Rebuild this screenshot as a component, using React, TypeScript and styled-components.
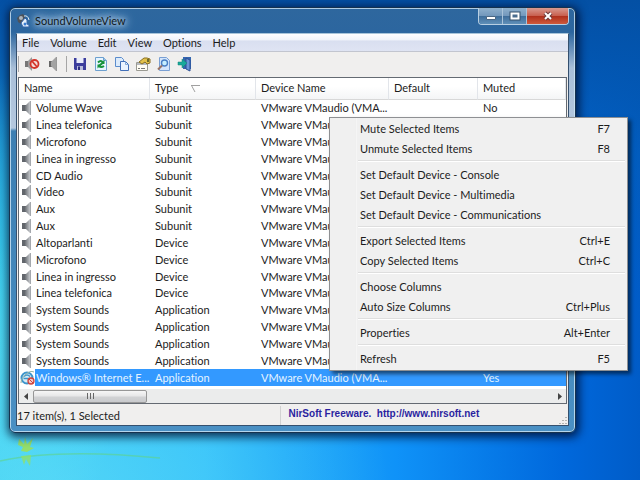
import React from "react";
import styled, { createGlobalStyle, css } from "styled-components";

const GlobalStyle = createGlobalStyle`
  * { box-sizing: border-box; }
  body { margin: 0; font-family: Lato, "Noto Sans", sans-serif; font-size: 11px; font-variant-ligatures: none; color: #1c1c1c; }
  button, kbd { font: inherit; font-variant-ligatures: none; color: inherit; border: 0; background: none; padding: 0; }
`;

const Desktop = styled.main`
  position: relative;
  min-height: 100vh;
  padding: 7px 64px 48px 9px;
  overflow: hidden;
  background:
    radial-gradient(ellipse 340px 260px at 8% 104%, rgba(130, 238, 255, 0.45), transparent),
    radial-gradient(ellipse 120px 260px at 0% 70%, rgba(70, 214, 240, 0.8), transparent),
    linear-gradient(180deg, #0450a4 0%, rgba(3, 84, 172, 0.9) 12%, rgba(4, 92, 180, 0.5) 32%, rgba(0, 100, 200, 0) 62%),
    linear-gradient(90deg, #2cc4ee 0%, #2cbcf8 32%, #0f92f8 62%, #0068dc 88%, #005cc8 100%);
`;

const Flower = styled.svg`
  position: absolute;
  left: 0;
  bottom: 0;
`;

const Window = styled.section`
  position: relative;
  padding: 0 6px 6px;
  border: 1px solid #16324e;
  border-radius: 6px;
  box-shadow: inset 0 0 0 1px rgba(206, 230, 246, 0.8), 1px 2px 10px 2px rgba(0, 10, 40, 0.8);
  background: linear-gradient(180deg, #2e679e 0, #2c669f 24px, #a9bfd8 60px, #b4c8df 120px, #3d7fb2 123px, #4a90c4 100%);
`;

const TitleBar = styled.header`
  display: flex;
  align-items: center;
  height: 25px;
  gap: 5px;
`;

const TitleText = styled.h1`
  margin: 0;
  flex: 1;
  font-size: 11px;
  line-height: 22px;
  font-weight: 400;
  color: #101820;
  text-shadow: 0 0 5px #c0d8ee, 0 0 8px #b8d4ec, 0 0 10px #b8d4ec, 0 0 14px #a8c8e4;
`;

const Controls = styled.div`
  display: flex;
  align-self: flex-start;
  height: 17px;
  border: 1px solid #b8cfe2;
  border-top: 0;
  border-radius: 0 0 4px 4px;
  overflow: hidden;
`;

const ControlButton = styled.button<{ $close?: boolean }>`
  display: grid;
  place-items: center;
  width: ${(p) => (p.$close ? 41 : 24)}px;
  border-right: ${(p) => (p.$close ? 0 : 1)}px solid #a9c3da;
  background: ${(p) =>
    p.$close
      ? "linear-gradient(180deg, #d99a90 0, #c8604f 48%, #b0301c 52%, #cf5a3c 100%)"
      : "linear-gradient(180deg, #8fb0cd 0, #7398bc 48%, #3f6e9b 52%, #5f8fb8 100%)"};
`;

const Client = styled.div`
  border: 1px solid #35506e;
  border-top-color: #a8c4da;
  background: #f0efee;
`;

const MenuBar = styled.nav`
  display: flex;
  gap: 11px;
  height: 18px;
  padding: 0 5px;
  background: linear-gradient(180deg, #fdfdff 0, #f0f3fa 36%, #d9dff0 40%, #dfe4f3 100%);
  border-bottom: 1px solid #c2c5cf;
  line-height: 17px;
`;

const ToolBar = styled.div`
  display: flex;
  align-items: center;
  gap: 5px;
  height: 25px;
  padding: 0 1px 2px;
`;

const ToolButton = styled.button`
  display: grid;
  width: 16px;
  height: 16px;
`;

const Divider = styled.span`
  width: 1px;
  height: 16px;
  background: #a6a6a6;
`;

const ListView = styled.div`
  margin: 0 1px;
  border: 1px solid #646a72;
  background: #fff;
`;

const Rows = styled.div`
  height: 311px;
`;

const Table = styled.table`
  width: 100%;
  height: 308px;
  table-layout: fixed;
  border-collapse: separate;
  border-spacing: 0;
`;

const HeadCell = styled.th<{ $width?: number }>`
  width: ${(p) => (p.$width ? p.$width + "px" : "auto")};
  height: 22px;
  padding: 0 5px 2px;
  text-align: left;
  font-weight: 400;
  line-height: 16px;
  white-space: nowrap;
  background: linear-gradient(180deg, #fff 40%, #f4f5f6 100%);
  border-bottom: 1px solid #d8d8d8;
  border-right: 1px solid #e2e5ea;
`;

const SortMark = styled.svg`
  margin-left: 13px;
  vertical-align: -1px;
`;

const Row = styled.tr<{ $selected?: boolean }>`
  ${(p) =>
    p.$selected &&
    css`
      color: #e4f4ff;
      td { background: #3399ff; }
      td:first-child { background: linear-gradient(90deg, transparent 16px, #3399ff 16px); }
    `}
`;

const Cell = styled.td`
  padding: 0 5px;
  line-height: 16px;
  white-space: nowrap;
`;

const NameCell = styled(Cell)`
  padding: 0 0 0 1px;
`;

const NameLine = styled.div`
  display: flex;
  align-items: center;
  gap: 2px;
`;

const IconSlot = styled.i`
  display: grid;
  place-items: center;
  width: 14px;
  height: 16px;
`;

const ScrollBar = styled.div`
  display: flex;
  align-items: center;
  height: 14px;
  background: #ebecec;
`;

const ArrowButton = styled.button`
  display: grid;
  place-items: center;
  width: 14px;
  height: 14px;
`;

const Track = styled.div`
  flex: 1;
`;

const Thumb = styled.div`
  display: grid;
  place-items: center;
  width: 22%;
  height: 13px;
  border: 1px solid #979797;
  border-radius: 2px;
  background: linear-gradient(180deg, #f6f6f6 0, #e6e6e7 48%, #d2d3d5 52%, #c9cacd 100%);
`;

const StatusBar = styled.footer`
  display: flex;
  height: 21px;
  padding-top: 2px;
  line-height: 20px;
`;

const StatusText = styled.div`
  width: 48%;
  border-right: 1px solid #d2d2d2;
`;

const HomeLink = styled.a`
  flex: 1;
  padding-left: 7px;
  font: bold 10px/16px "Liberation Sans", Arial, sans-serif;
  color: #2a1fa0;
  text-decoration: none;
  white-space: pre;
`;

const Grip = styled.svg`
  align-self: flex-end;
`;

const ContextMenu = styled.div`
  position: absolute;
  top: 117px;
  left: 329px;
  width: 299px;
  padding: 0 1px 2px;
  border: 1px solid #8e9093;
  background: linear-gradient(90deg, #f0f0f0 25px, #e4e4e4 25px, #fafafa 26px, #f0f0f0 27px);
  box-shadow: 3px 3px 4px rgba(0, 0, 0, 0.55);
`;

const ContextItem = styled.button`
  display: flex;
  justify-content: space-between;
  align-items: center;
  width: 100%;
  height: 20px;
  padding: 0 16px 0 29px;
  white-space: nowrap;
`;

const Separator = styled.hr`
  height: 2px;
  margin: 2px 1px 2px 27px;
  border: 0;
  border-top: 1px solid #dedede;
  background: #fff;
`;

const Speaker = () => (
  <svg width="10" height="14" viewBox="0 0 10 14">
    <defs>
      <linearGradient id="cone" x1="0" x2="1">
        <stop offset="0" stopColor="#6c7075" />
        <stop offset="1" stopColor="#c3c6ca" />
      </linearGradient>
    </defs>
    <path d="M0 4h4v6H0z" fill="#62666c" />
    <path d="M3 5 8 0v14L3 9z" fill="url(#cone)" />
    <path d="M8.5 0v14" stroke="#a4a8ad" />
  </svg>
);

const Browser = () => (
  <svg width="15" height="15" viewBox="0 0 15 15">
    <circle cx="7" cy="8" r="5.5" fill="#d4ecf8" stroke="#3e95cc" strokeWidth="2" />
    <path d="M3.5 8.5h7M4 6.5q3-3 6 0" fill="none" stroke="#3e95cc" strokeWidth="1.5" />
    <path d="M1 13Q0 10 5 5T14 2" fill="none" stroke="#93b2a6" />
    <circle cx="11" cy="11" r="3" fill="#f3c8c8" stroke="#d0443c" strokeWidth="1.3" />
    <path d="m9 9 4 4" stroke="#d0443c" />
  </svg>
);

const AppIcon = () => (
  <svg width="14" height="15" viewBox="0 0 14 15">
    <path d="M1 5 4 2l3-1 2 2-1 5-3 3-3-2z" fill="#4c535b" />
    <circle cx="5" cy="5" r="2" fill="#aeb6bd" />
    <path d="M8 3q4-1 5 4" fill="none" stroke="#e5eef5" />
    <path d="m5 10 4-5 2 2v4l2 1v2H7z" fill="#e6f0fa" stroke="#3465ac" />
    <circle cx="9" cy="11" r="1.5" fill="#3b7bd0" />
  </svg>
);

const tools: [string, React.ReactNode][] = [
  ["Mute", <>
    <path d="M1 5h3v6H1z" fill="#777" /><path d="M4 5 8 1v14l-4-4z" fill="#9b9b9b" />
    <circle cx="10.5" cy="8" r="4" fill="#f3dcd8" stroke="#d3352b" strokeWidth="1.8" /><path d="m8 5 5 6" stroke="#d3352b" strokeWidth="1.8" />
  </>],
  ["Unmute", <>
    <path d="M4 5h3v6H4z" fill="#666" /><path d="m6 6 5-5v14l-5-5z" fill="#a3a3a3" /><path d="M11.5 1v14" stroke="#999" />
  </>],
  ["Save", <>
    <path d="M2 2h12v12H3l-1-1z" fill="#3c3d9c" /><path d="M4.5 2h7v5h-7z" fill="#e9ecfa" /><path d="M5 10h6v4H5z" fill="#b9bddc" /><path d="M6 10.5h2V14H6z" fill="#2d2e80" />
  </>],
  ["Refresh", <>
    <path d="M2.5 1.5h8l3 3v10h-11z" fill="#e6f4ff" stroke="#6da0cf" /><path d="M10.5 1.5v3h3" fill="#9dc4e6" stroke="#6da0cf" />
    <path d="M5 6.5q3-3 5 0L6 10q2 2 5 0" fill="none" stroke="#15933a" strokeWidth="2" /><path d="M11.5 4v4h-4zM4.5 12.5v-4h4z" fill="#15933a" />
  </>],
  ["Copy", <>
    <path d="M1.5 1.5h6l2 2v7h-8z" fill="#dcebfb" stroke="#5b8ccc" /><path d="M6.5 5.5h5l3 3v6h-8z" fill="#e9f3ff" stroke="#416fb8" /><path d="M11.5 5.5v3h3" fill="none" stroke="#80a8da" />
  </>],
  ["Properties", <>
    <path d="M1.5 6.5h11v8h-11z" fill="#fffdf4" stroke="#9a9a92" /><path d="M2 7h10v2H2z" fill="#b6b9bf" /><path d="M3 12.5h2M6 12.5h4" stroke="#777" />
    <path d="m4 6 5-4h3l3 1v4l-3 1-2-2-3 2z" fill="#e3c14a" stroke="#897125" /><path d="M12 3h2v3h-2z" fill="#6f6b29" />
  </>],
  ["Find", <>
    <path d="M3.5 1.5h7l3 3v10h-10z" fill="#d4e5fb" stroke="#7aa0d4" /><circle cx="8.5" cy="7" r="3" fill="#c7efff" stroke="#4a7fc4" strokeWidth="1.4" /><path d="m6 9.5-4 4" stroke="#9a7466" strokeWidth="2" />
  </>],
  ["Exit", <>
    <path d="M6 1h8v12H6z" fill="#3566b0" /><path d="m9 2 4 2v11l-4-2z" fill="#6a94d6" stroke="#2c4f94" /><path d="M1 6h4V3l5 4-5 5V9H1z" fill="#18a99b" stroke="#138275" strokeWidth=".5" />
  </>],
];

const names = ["Volume Wave", "Linea telefonica", "Microfono", "Linea in ingresso", "CD Audio", "Video", "Aux", "Aux", "Altoparlanti", "Microfono", "Linea in ingresso", "Linea telefonica", "System Sounds", "System Sounds", "System Sounds", "System Sounds", "Windows® Internet E..."];
const rows = names.map((name, i) => ({
  name,
  type: i < 8 ? "Subunit" : i < 12 ? "Device" : "Application",
  muted: i === 16 ? "Yes" : i === 0 ? "No" : "",
  selected: i === 16,
}));

const groups = [
  [["Mute Selected Items", "F7"], ["Unmute Selected Items", "F8"]],
  [["Set Default Device - Console", ""], ["Set Default Device - Multimedia", ""], ["Set Default Device - Communications", ""]],
  [["Export Selected Items", "Ctrl+E"], ["Copy Selected Items", "Ctrl+C"]],
  [["Choose Columns", ""], ["Auto Size Columns", "Ctrl+Plus"]],
  [["Properties", "Alt+Enter"]],
  [["Refresh", "F5"]],
];

export default function App() {
  return (
    <Desktop>
      <GlobalStyle />
      <Flower width="220" height="50" viewBox="0 0 220 50">
        <path d="M0 30Q60 17 160 27" fill="none" stroke="#5fd48a" strokeWidth="1.5" opacity=".6" />
        <path d="m19 8 5 5 1-7 2 7 6-6-3 9 4 1-7 4-6-1 2-4-5-2z" fill="#a4e04a" opacity=".8" />
        <path d="m21 25 3 9 2-6 4 7 1-11z" fill="#8ee06c" opacity=".8" />
      </Flower>
      <Window>
        <TitleBar>
          <AppIcon />
          <TitleText>SoundVolumeView</TitleText>
          <Controls>
            <ControlButton aria-label="Minimize">
              <svg width="12" height="12"><path d="M1.5 6.5h9v3h-9z" fill="#fff" stroke="#4b6784" /></svg>
            </ControlButton>
            <ControlButton aria-label="Maximize">
              <svg width="12" height="12"><path d="M2.5 3.5h7v5h-7z" fill="none" stroke="#35506c" strokeWidth="4" /><path d="M2.5 3.5h7v5h-7z" fill="#4c6e90" stroke="#fff" strokeWidth="2" /></svg>
            </ControlButton>
            <ControlButton aria-label="Close" $close>
              <svg width="12" height="12"><path d="m3 3 6 6M9 3 3 9" stroke="#6b3a3a" strokeWidth="4" /><path d="m3 3 6 6M9 3 3 9" stroke="#fff" strokeWidth="2" /></svg>
            </ControlButton>
          </Controls>
        </TitleBar>
        <Client>
          <MenuBar>
            {["File", "Volume", "Edit", "View", "Options", "Help"].map((m) => <button key={m}>{m}</button>)}
          </MenuBar>
          <ToolBar>
            {tools.map(([label, art], i) => (
              <React.Fragment key={label}>
                {(i === 0 || i === 2) && <Divider />}
                <ToolButton aria-label={label}><svg width="16" height="16" viewBox="0 0 16 16">{art}</svg></ToolButton>
              </React.Fragment>
            ))}
          </ToolBar>
          <ListView>
            <Rows>
              <Table>
                <thead>
                  <tr>
                    <HeadCell $width={131}>Name</HeadCell>
                    <HeadCell $width={106}>Type
                      <SortMark width="9" height="8"><path d="M0 .5h9M.5 .5 4 7" fill="none" stroke="#a0a0a0" /></SortMark>
                    </HeadCell>
                    <HeadCell $width={133}>Device Name</HeadCell>
                    <HeadCell $width={89}>Default</HeadCell>
                    <HeadCell>Muted</HeadCell>
                  </tr>
                </thead>
                <tbody>
                  {rows.map((r, i) => (
                    <Row key={i} $selected={r.selected}>
                      <NameCell>
                        <NameLine>
                          <IconSlot>{r.selected ? <Browser /> : <Speaker />}</IconSlot>
                          <span>{r.name}</span>
                        </NameLine>
                      </NameCell>
                      <Cell>{r.type}</Cell>
                      <Cell>VMware VMaudio (VMA...</Cell>
                      <Cell />
                      <Cell>{r.muted}</Cell>
                    </Row>
                  ))}
                </tbody>
              </Table>
            </Rows>
            <ScrollBar>
              <ArrowButton aria-label="Scroll left"><svg width="5" height="7"><path d="M4 0v7L0 3.5z" fill="#444" /></svg></ArrowButton>
              <Track>
                <Thumb><svg width="8" height="6"><path d="M1.5 0v6M4.5 0v6M7.5 0v6" stroke="#666" /></svg></Thumb>
              </Track>
              <ArrowButton aria-label="Scroll right"><svg width="5" height="7"><path d="M1 0v7l4-3.5z" fill="#444" /></svg></ArrowButton>
            </ScrollBar>
          </ListView>
          <StatusBar>
            <StatusText>17 item(s), 1 Selected</StatusText>
            <HomeLink href="http://www.nirsoft.net">{"NirSoft Freeware.  http://www.nirsoft.net"}</HomeLink>
            <Grip width="9" height="9"><path d="M6 1h2v1H6zM3 4h2v1H3zM6 4h2v1H6zM0 7h2v1H0zM3 7h2v1H3zM6 7h2v1H6z" fill="#b4b4b0" /></Grip>
          </StatusBar>
        </Client>
      </Window>
      <ContextMenu>
        {groups.map((group, i) => (
          <React.Fragment key={i}>
            {i > 0 && <Separator />}
            {group.map(([label, key]) => (
              <ContextItem key={label}><span>{label}</span>{key && <kbd>{key}</kbd>}</ContextItem>
            ))}
          </React.Fragment>
        ))}
      </ContextMenu>
    </Desktop>
  );
}
